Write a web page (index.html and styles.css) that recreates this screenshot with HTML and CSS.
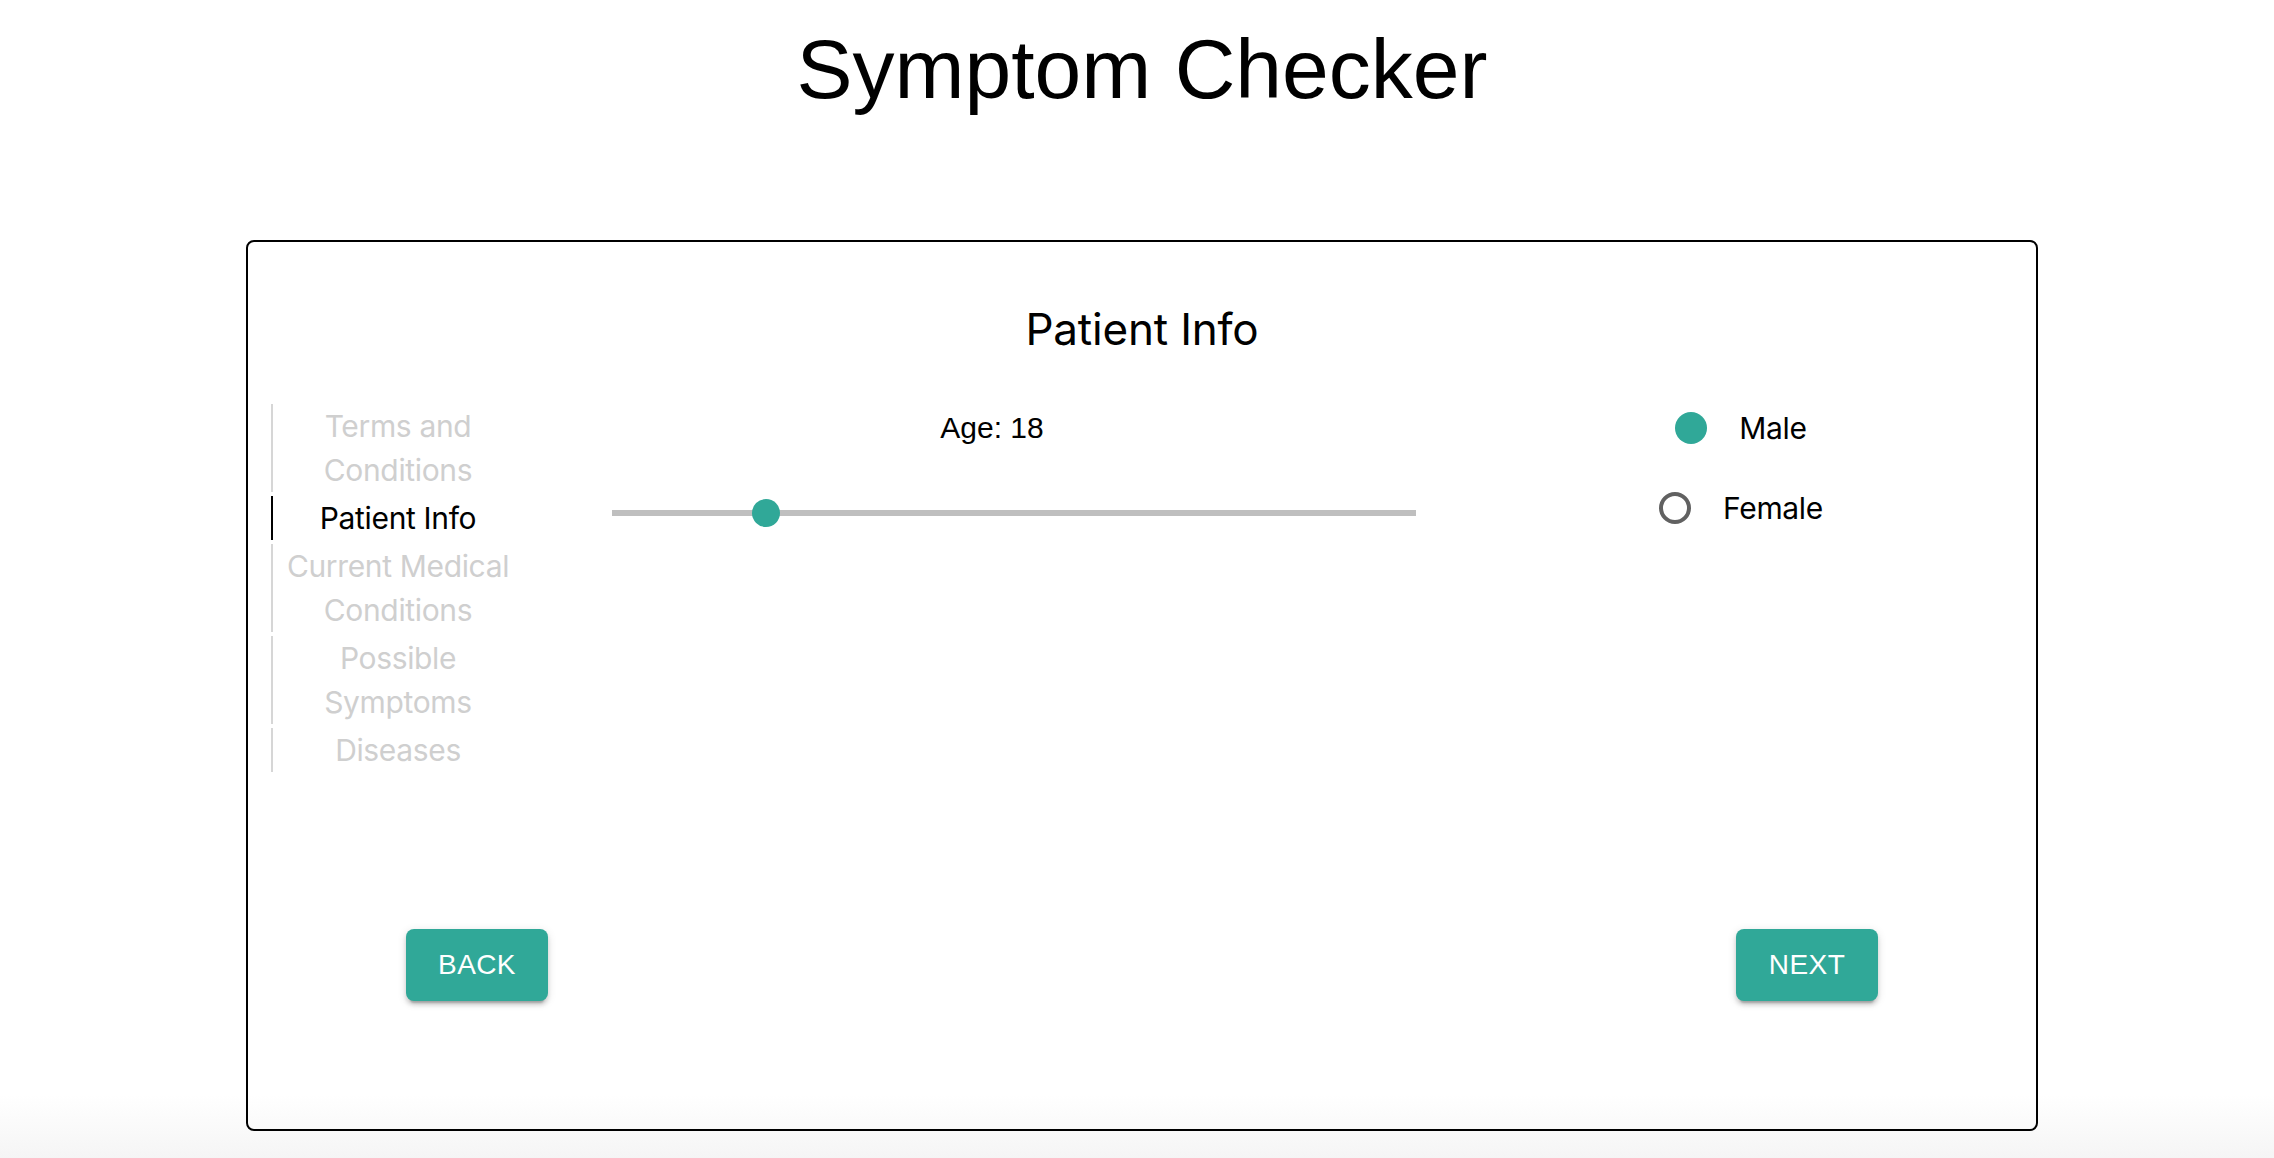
FILE: index.html
```
<!DOCTYPE html>
<html lang="en">
<head>
<meta charset="utf-8">
<title>Symptom Checker</title>
<link rel="stylesheet" href="styles.css">
</head>
<body>
<div class="page">
  <h1 class="app-title">Symptom Checker</h1>
  <section class="card">
    <h2 class="card-title">Patient Info</h2>
    <div class="card-body">
      <ol class="steps">
        <li class="step">Terms and<br>Conditions</li>
        <li class="step step-active">Patient Info</li>
        <li class="step">Current Medical<br>Conditions</li>
        <li class="step">Possible<br>Symptoms</li>
        <li class="step">Diseases</li>
      </ol>
      <div class="age-field">
        <div class="age-label">Age: 18</div>
        <input class="age-slider" type="range" min="0" max="100" value="18">
      </div>
      <div class="gender-field">
        <label class="radio-row"><span class="radio radio-checked"></span><span class="radio-label">Male</span></label>
        <label class="radio-row"><span class="radio"></span><span class="radio-label">Female</span></label>
      </div>
    </div>
    <div class="card-actions">
      <button class="btn" type="button">Back</button>
      <button class="btn" type="button">Next</button>
    </div>
  </section>
</div>
</body>
</html>
```
FILE: styles.css
```
html, body {
  margin: 0;
  padding: 0;
}
body {
  min-height: 1158px;
  background: linear-gradient(to bottom, #ffffff 0, #ffffff 1095px, #f5f5f5 1158px);
  font-family: "Inter", "Noto Sans", sans-serif;
  color: #000;
}
.page {
  padding: 21px 236px 0 246px;
}
.app-title {
  margin: 0;
  font-family: "Liberation Sans", Arial, sans-serif;
  font-weight: 400;
  font-size: 84px;
  line-height: 96px;
  text-align: center;
}
.card {
  margin-top: 123px;
  height: 891px;
  box-sizing: border-box;
  border: 2px solid #000;
  border-radius: 8px;
  display: flex;
  flex-direction: column;
}
.card-title {
  margin: 61px 0 0;
  font-weight: 400;
  font-size: 44px;
  line-height: 53px;
  letter-spacing: -0.2px;
  text-align: center;
}
.card-body {
  display: flex;
  align-items: flex-start;
  margin-top: 48px;
}
.steps {
  list-style: none;
  margin: 0 0 0 23px;
  padding: 0;
  width: 252px;
  display: flex;
  flex-direction: column;
  gap: 4px;
}
.step {
  border-left: 2px solid #d6d6d6;
  text-align: center;
  font-size: 30px;
  line-height: 44px;
  letter-spacing: -0.35px;
  color: #cfcfcf;
}
.step-active {
  border-left-color: #000;
  color: #000;
}
.age-field {
  margin-left: 45px;
  width: 848px;
  padding-top: 2px;
}
.age-label {
  font-family: "Liberation Sans", Arial, sans-serif;
  font-size: 30px;
  line-height: 44px;
  text-align: center;
}
.age-slider {
  -webkit-appearance: none;
  appearance: none;
  display: block;
  width: 804px;
  height: 28px;
  margin: 49px 0 0 44px;
  padding: 0;
  background: transparent;
}
.age-slider::-webkit-slider-runnable-track {
  height: 6px;
  background: #bfbfbf;
  border: none;
}
.age-slider::-webkit-slider-thumb {
  -webkit-appearance: none;
  appearance: none;
  width: 28px;
  height: 28px;
  margin-top: -11px;
  border: none;
  border-radius: 50%;
  background: #30a898;
}
.gender-field {
  flex: 1;
  margin-left: 30px;
  display: flex;
  flex-direction: column;
  align-items: center;
  gap: 32px;
}
.radio-row {
  display: flex;
  align-items: center;
  gap: 32px;
  height: 48px;
}
.radio {
  width: 32px;
  height: 32px;
  box-sizing: border-box;
  border: 4px solid #616161;
  border-radius: 50%;
}
.radio-checked {
  border: none;
  background: #30a898;
}
.radio-label {
  font-size: 30px;
  line-height: 44px;
  letter-spacing: -0.35px;
}
.card-actions {
  margin-top: auto;
  margin-bottom: 128px;
  padding: 0 158px;
  display: flex;
  justify-content: space-between;
}
.btn {
  width: 142px;
  height: 72px;
  padding: 0;
  border: none;
  border-radius: 8px;
  background: #30a898;
  color: #fff;
  font-family: "Liberation Sans", Arial, sans-serif;
  font-weight: 400;
  font-size: 28px;
  letter-spacing: 0.4px;
  text-transform: uppercase;
  box-shadow: 0 6px 2px -4px rgba(0,0,0,0.2), 0 4px 4px 0 rgba(0,0,0,0.14), 0 2px 10px 0 rgba(0,0,0,0.12);
}
```
